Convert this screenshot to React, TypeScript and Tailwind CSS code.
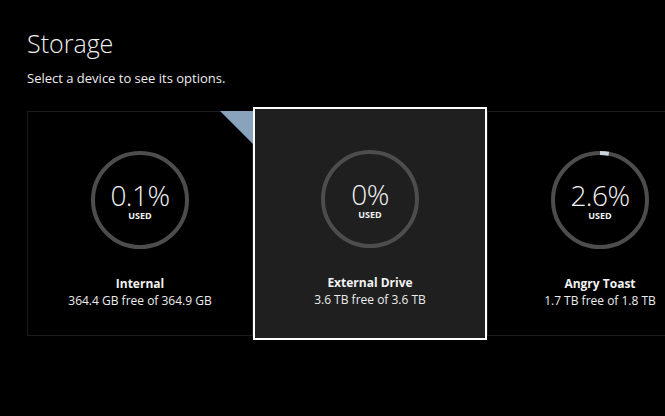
import React from "react";

type Drive = { pct: string; name: string; free: string; used: number };

function Ring({ used }: { used: number }) {
  const r = 47;
  const c = 2 * Math.PI * r;
  return (
    <svg width="98" height="98" viewBox="0 0 98 98" className="absolute inset-0">
      <circle cx="49" cy="49" r={r} fill="none" stroke="#4d4d4d" strokeWidth="4" />
      {used > 0 && (
        <circle
          cx="49"
          cy="49"
          r={r}
          fill="none"
          stroke="#c9d3d8"
          strokeWidth="4"
          strokeDasharray={`${c * used} ${c}`}
          transform="rotate(-90 49 49)"
        />
      )}
    </svg>
  );
}

function Content({ d }: { d: Drive }) {
  return (
    <div className="flex flex-col items-center">
      <div className="relative w-[98px] h-[98px] flex flex-col items-center justify-center">
        <Ring used={d.used} />
        <div className="text-[28px] leading-[26px] font-light text-[#f2f2f2] mt-[2px] tracking-[-0.5px]">{d.pct}</div>
        <div className="text-[9px] leading-[10px] font-bold text-[#f2f2f2] mt-[3px]">USED</div>
      </div>
      <div className="mt-[27px] text-[12px] leading-[16px] font-bold text-[#f2f2f2]">{d.name}</div>
      <div className="mt-[1px] text-[12px] leading-[16px] text-[#ececec]">{d.free}</div>
    </div>
  );
}

export default function App() {
  const drives: Drive[] = [
    { pct: "0.1%", name: "Internal", free: "364.4 GB free of 364.9 GB", used: 0 },
    { pct: "0%", name: "External Drive", free: "3.6 TB free of 3.6 TB", used: 0 },
    { pct: "2.6%", name: "Angry Toast", free: "1.7 TB free of 1.8 TB", used: 0.03 },
  ];
  return (
    <div
      className="w-[665px] h-[416px] bg-black overflow-hidden text-white"
      style={{ fontFamily: '"Open Sans", "Noto Sans", sans-serif' }}
    >
      <div className="pl-[27px] pt-[27px]">
        <div className="text-[25px] leading-[32px] font-light text-[#f0f0f0]">Storage</div>
        <div className="mt-[10px] text-[13px] leading-[18px] text-[#ededed]">
          Select a device to see its options.
        </div>
      </div>
      <div className="flex items-center pl-[27px] mt-[20px] w-[900px]">
        <div className="relative w-[226px] h-[225px] shrink-0 border border-[#1c1c1c] pt-[39px]">
          <div
            className="absolute top-[-1px] right-[-1px] w-[33px] h-[33px] bg-[#8aa3bd]"
            style={{ clipPath: "polygon(0 0, 100% 0, 100% 100%)" }}
          />
          <Content d={drives[0]} />
        </div>
        <div className="w-[234px] h-[233px] shrink-0 border-2 border-white bg-[#1f1f1f] pt-[41px]">
          <Content d={drives[1]} />
        </div>
        <div className="w-[226px] h-[225px] shrink-0 border border-[#1c1c1c] pt-[39px]">
          <Content d={drives[2]} />
        </div>
      </div>
    </div>
  );
}
